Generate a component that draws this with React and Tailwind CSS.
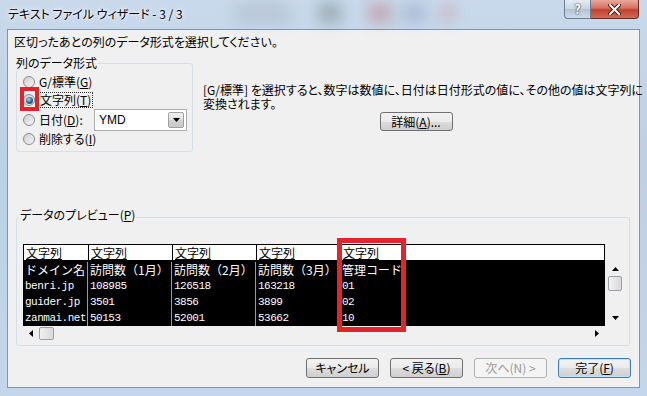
import React from 'react';

const cols = [
  { w: 64, head: '文字列', cells: ['ドメイン名', 'benri.jp', 'guider.jp', 'zanmai.net'] },
  { w: 84, head: '文字列', cells: ['訪問数（1月）', '108985', '3501', '50153'] },
  { w: 84, head: '文字列', cells: ['訪問数（2月）', '126518', '3856', '52001'] },
  { w: 84, head: '文字列', cells: ['訪問数（3月）', '163218', '3899', '53662'] },
  { w: 264, head: '文字列', cells: ['管理コード', '01', '02', '10'] },
];

const Radio = ({ checked }) => (
  <span className="w-[12px] h-[12px] rounded-full border border-[#8b8b8b] bg-[linear-gradient(135deg,#cfcfcf,#f6f6f6)] flex items-center justify-center shrink-0">
    {checked && (
      <span className="w-[7px] h-[7px] rounded-full bg-[radial-gradient(circle_at_40%_35%,#a9dcf5,#2a6f9f_50%,#0b2b47)]" />
    )}
  </span>
);

const Btn = ({ children, kind }) => {
  let look = 'border-[#707070] bg-[linear-gradient(#f2f2f2,#ebebeb_50%,#dddddd_50%,#cfcfcf)] text-black';
  if (kind === 'disabled') look = 'border-[#adb2b5] bg-[#f4f4f4] text-[#9a9a9a]';
  if (kind === 'default') look = 'border-[#3c7fb1] bg-[linear-gradient(#f2f2f2,#ebebeb_50%,#dddddd_50%,#cfcfcf)] text-black shadow-[inset_0_0_0_1px_#b8e3f8]';
  return (
    <div className={`w-[73px] h-[20px] rounded-[3px] border flex items-center justify-center text-[12px] leading-none ${look}`}>
      {children}
    </div>
  );
};

export default function App() {
  return (
    <div className="w-[647px] h-[396px] relative overflow-hidden bg-[linear-gradient(#c9d9eb,#bcd0e6_40%,#c3d6eb)] font-['Noto_Sans_CJK_JP',sans-serif] [font-feature-settings:'palt'] text-black">
      {/* blurred glass behind the title */}
      <div className="absolute left-[235px] top-[3px] w-[55px] h-[20px] bg-[#9aa3ad] blur-[8px] opacity-35" />
      <div className="absolute left-[318px] top-[2px] w-[24px] h-[22px] bg-[#5c6e63] blur-[7px] opacity-35" />
      <div className="absolute left-[368px] top-[3px] w-[24px] h-[20px] bg-[#b76a6f] blur-[7px] opacity-40" />
      <div className="absolute left-[402px] top-[3px] w-[24px] h-[20px] bg-[#7d8fb4] blur-[7px] opacity-35" />
      <div className="absolute left-[440px] top-[5px] w-[16px] h-[16px] bg-[#c98585] blur-[7px] opacity-35" />

      {/* title bar */}
      <div className="relative h-[29px] flex items-start">
        <span className="pl-[8px] pt-[6px] text-[12px] leading-[16px] [text-shadow:0_0_6px_#fff,0_0_3px_#fff]">
          テキスト ファイル ウィザード - 3 / 3
        </span>
        <div className="ml-auto mr-[8px] flex">
          <div className="w-[27px] h-[19px] rounded-bl-[4px] border border-t-0 border-[#6b7d92] bg-[linear-gradient(#e5ecf4,#c9d5e3_50%,#b3c3d6_50%,#cfdbe8)] flex items-center justify-center text-[13px] font-bold text-white [text-shadow:0_0_1px_#333,0_0_2px_#333]">
            ?
          </div>
          <div className="w-[48px] h-[19px] rounded-br-[4px] border border-l-0 border-t-0 border-[#6a2a22] bg-[linear-gradient(#e9a99c,#d5705f_45%,#c2412d_55%,#d66a54)] flex items-center justify-center">
            <svg width="13" height="11" viewBox="0 0 13 11">
              <path d="M2 1 L11 10 M11 1 L2 10" stroke="#4a1a14" strokeWidth="4" strokeLinecap="square" />
              <path d="M2 1 L11 10 M11 1 L2 10" stroke="#fff" strokeWidth="2" strokeLinecap="square" />
            </svg>
          </div>
        </div>
      </div>

      {/* client area */}
      <div className="ml-[7px] w-[633px] h-[359px] border border-[#7f95b0] bg-[#f0f0f0] flex flex-col text-[12px]">
        <div className="pl-[6px] pt-[4px] h-[20px] leading-[16px]">
          区切ったあとの列のデータ形式を選択してください。
        </div>

        <div className="mt-[13px] ml-[8px] flex">
          {/* column data format group */}
          <div className="relative w-[177px] h-[89px] border border-[#d5dfe5] rounded-[3px] pl-[6px] pt-[9px] flex flex-col">
            <span className="absolute left-[-2px] top-[-9px] px-[1px] bg-[#f0f0f0] leading-[16px]">列のデータ形式</span>
            <div className="h-[18px] flex items-center gap-[4px]">
              <Radio />
              <span>G/標準(<u>G</u>)</span>
            </div>
            <div className="h-[18px] flex items-center gap-[3px]">
              <Radio checked />
              <span className="border border-dotted border-[#333] px-[1px] leading-[14px]">文字列(<u>T</u>)</span>
            </div>
            <div className="h-[22px] flex items-center gap-[4px] whitespace-nowrap">
              <Radio />
              <span className="shrink-0">日付(<u>D</u>):</span>
              <div className="ml-auto mr-[5px] w-[93px] shrink-0 h-[22px] border border-[#abadb3] bg-white flex items-center pl-[4px] pr-[2px]">
                <span className="font-['Liberation_Sans',sans-serif] text-[12px]">YMD</span>
                <div className="ml-auto w-[16px] h-[16px] border border-[#a0a0a0] rounded-[2px] bg-[linear-gradient(#f2f2f2,#e0e0e0_50%,#d2d2d2_50%,#c8c8c8)] flex items-center justify-center">
                  <svg width="7" height="4" viewBox="0 0 7 4"><path d="M0 0 H7 L3.5 4 Z" fill="#000" /></svg>
                </div>
              </div>
            </div>
            <div className="h-[16px] flex items-center gap-[4px]">
              <Radio />
              <span>削除する(<u>I</u>)</span>
            </div>
            <div className="absolute left-[3px] top-[23px] w-[19px] h-[24px] border-[4px] border-[#e4232b]" />
          </div>

          {/* description + advanced */}
          <div className="ml-[10px] w-[430px] pt-[20px] flex flex-col items-center">
            <div className="self-start leading-[14px] whitespace-nowrap">
              [G/標準] を選択すると、数字は数値に、日付は日付形式の値に、その他の値は文字列に
              <br />
              変換されます。
            </div>
            <div className="mt-[1px] mr-[4px] w-[73px] h-[19px] rounded-[3px] border border-[#707070] bg-[linear-gradient(#f2f2f2,#ebebeb_50%,#dddddd_50%,#cfcfcf)] flex items-center justify-center leading-none">
              詳細(<u>A</u>)...
            </div>
          </div>
        </div>

        {/* preview group */}
        <div className="relative mt-[65px] ml-[8px] w-[614px] h-[129px] border border-[#d5dfe5] rounded-[3px] pl-[6px] pt-[26px] flex">
          <span className="absolute left-[2px] top-[-11px] px-[1px] bg-[#f0f0f0] leading-[16px]">
            データのプレビュー(<u>P</u>)
          </span>
          <div className="flex flex-col w-[582px]">
            <div className="h-[16px] border border-b-0 border-black bg-white flex [font-feature-settings:normal]">
              {cols.map((c, i) => (
                <div
                  key={i}
                  className={`h-full leading-[15px] text-[12px] pl-[2px] ${i > 0 ? 'border-l border-black' : ''}`}
                  style={{ width: c.w }}
                >
                  <span className="underline">{c.head}</span>
                </div>
              ))}
            </div>
            <div className="h-[66px] bg-black flex pt-[2px] text-white font-['Liberation_Mono','Noto_Sans_CJK_JP',monospace] [font-feature-settings:normal] text-[11px] tracking-[-0.5px]">
              {cols.map((c, i) => (
                <div
                  key={i}
                  className={`flex flex-col ${i > 0 ? 'border-l border-[#9a9a9a]' : ''}`}
                  style={{ width: c.w }}
                >
                  {c.cells.map((t, j) => (
                    <div
                      key={j}
                      className={`h-[16px] leading-[16px] pl-[2px] whitespace-nowrap overflow-hidden ${j === 0 ? "font-['Noto_Sans_CJK_JP',sans-serif] text-[12px] tracking-normal" : ''}`}
                    >
                      {t}
                    </div>
                  ))}
                </div>
              ))}
            </div>
            {/* horizontal scrollbar */}
            <div className="h-[14px] flex items-center pl-[6px] pr-[6px]">
              <svg width="4" height="7" viewBox="0 0 4 7"><path d="M4 0 V7 L0 3.5 Z" fill="#000" /></svg>
              <div className="ml-[6px] w-[15px] h-[13px] border border-[#9aa0a6] rounded-[2px] bg-[linear-gradient(90deg,#f0f0f0,#dadada)]" />
              <svg className="ml-auto" width="4" height="7" viewBox="0 0 4 7"><path d="M0 0 V7 L4 3.5 Z" fill="#000" /></svg>
            </div>
          </div>
          {/* vertical scrollbar */}
          <div className="mt-[16px] ml-[2px] w-[16px] h-[66px] flex flex-col items-center pt-[7px]">
            <svg width="7" height="4" viewBox="0 0 7 4"><path d="M0 4 H7 L3.5 0 Z" fill="#000" /></svg>
            <div className="mt-[5px] w-[14px] h-[15px] border border-[#9aa0a6] rounded-[2px] bg-[linear-gradient(90deg,#f3f3f3,#d8d8d8)]" />
            <svg className="mt-auto mb-[6px]" width="7" height="4" viewBox="0 0 7 4"><path d="M0 0 H7 L3.5 4 Z" fill="#000" /></svg>
          </div>
          <div className="absolute left-[320px] top-[20px] w-[69px] h-[94px] border-[5px] border-[#e4232b]" />
        </div>

        {/* buttons */}
        <div className="mt-[12px] pr-[8px] flex justify-end gap-[11px]">
          <Btn>キャンセル</Btn>
          <Btn>&lt; 戻る(<u>B</u>)</Btn>
          <Btn kind="disabled">次へ(N) &gt;</Btn>
          <Btn kind="default">完了(<u>F</u>)</Btn>
        </div>
      </div>
    </div>
  );
}
